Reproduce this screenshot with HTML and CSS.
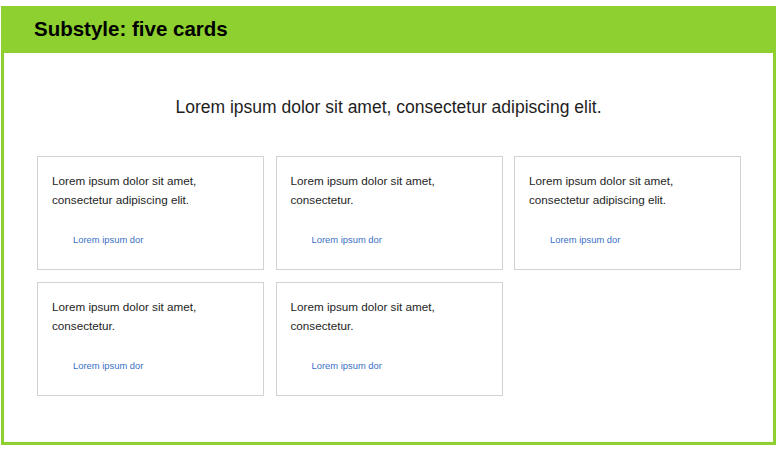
FILE: index.html
```html
<!DOCTYPE html>
<html>
<head>
<meta charset="utf-8">
<link rel="stylesheet" href="styles.css">
</head>
<body>
<div class="frame">
  <div class="header"><h1 class="title">Substyle: five cards</h1></div>
  <div class="content">
    <p class="lead">Lorem ipsum dolor sit amet, consectetur adipiscing elit.</p>
    <div class="grid">
      <div class="card"><p class="card-text">Lorem ipsum dolor sit amet, consectetur adipiscing elit.</p><a class="card-link">Lorem ipsum dor</a></div>
      <div class="card"><p class="card-text">Lorem ipsum dolor sit amet, consectetur.</p><a class="card-link">Lorem ipsum dor</a></div>
      <div class="card"><p class="card-text">Lorem ipsum dolor sit amet, consectetur adipiscing elit.</p><a class="card-link">Lorem ipsum dor</a></div>
      <div class="card"><p class="card-text">Lorem ipsum dolor sit amet, consectetur.</p><a class="card-link">Lorem ipsum dor</a></div>
      <div class="card"><p class="card-text">Lorem ipsum dolor sit amet, consectetur.</p><a class="card-link">Lorem ipsum dor</a></div>
    </div>
  </div>
</div>
</body>
</html>
```
FILE: styles.css
```css
html, body {
  margin: 0;
  padding: 0;
  background: #fff;
}
body {
  font-family: "Liberation Sans", Arial, sans-serif;
  color: #1e1e1e;
}
.frame {
  margin: 6px 2px 0 1px;
  width: 775px;
  height: 439px;
  box-sizing: border-box;
  border: 3px solid #8dd02f;
  display: flex;
  flex-direction: column;
}
.header {
  background: #8dd02f;
  height: 44px;
  box-sizing: border-box;
  display: flex;
  align-items: center;
  padding: 0 0 5px 30px;
}
.title {
  margin: 0;
  font-size: 20.5px;
  font-weight: bold;
  color: #000;
}
.content {
  padding: 0 33px;
}
.lead {
  margin: 43px 0 0;
  text-align: center;
  font-size: 17.5px;
  line-height: 22px;
  color: #1e1e1e;
}
.grid {
  margin-top: 38px;
  display: grid;
  grid-template-columns: repeat(3, 227px);
  column-gap: 11.5px;
  row-gap: 12px;
}
.card {
  height: 114px;
  box-sizing: border-box;
  border: 1.5px solid #d2d2d2;
  padding: 14px 14px 0;
  display: flex;
  flex-direction: column;
}
.card-text {
  margin: 0;
  font-size: 11.7px;
  line-height: 19px;
  color: #1e1e1e;
  height: 38px;
}
.card-link {
  margin: 24px 0 0 21px;
  font-size: 9.4px;
  line-height: 14px;
  color: #3a6fc6;
}
```
